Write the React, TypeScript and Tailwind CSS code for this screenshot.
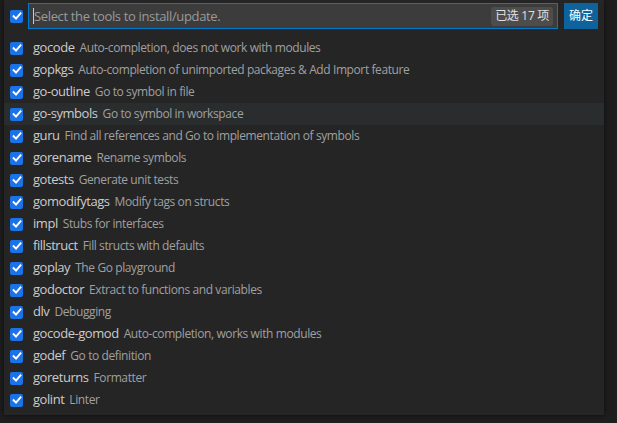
import React from "react";

const tools: [string, string][] = [
  ["gocode", "Auto-completion, does not work with modules"],
  ["gopkgs", "Auto-completion of unimported packages & Add Import feature"],
  ["go-outline", "Go to symbol in file"],
  ["go-symbols", "Go to symbol in workspace"],
  ["guru", "Find all references and Go to implementation of symbols"],
  ["gorename", "Rename symbols"],
  ["gotests", "Generate unit tests"],
  ["gomodifytags", "Modify tags on structs"],
  ["impl", "Stubs for interfaces"],
  ["fillstruct", "Fill structs with defaults"],
  ["goplay", "The Go playground"],
  ["godoctor", "Extract to functions and variables"],
  ["dlv", "Debugging"],
  ["gocode-gomod", "Auto-completion, works with modules"],
  ["godef", "Go to definition"],
  ["goreturns", "Formatter"],
  ["golint", "Linter"],
];

function Check() {
  return (
    <span className="flex items-center justify-center w-[13px] h-[13px] rounded-[2px] bg-[#1a73e8] shrink-0">
      <svg width="10" height="10" viewBox="0 0 10 10" fill="none">
        <path d="M1.6 5.2 L4 7.5 L8.5 2.3" stroke="white" strokeWidth="1.9" strokeLinecap="square" />
      </svg>
    </span>
  );
}

export default function App() {
  return (
    <div className="w-[617px] h-[423px] bg-[#1e1e1e] overflow-hidden" style={{ fontFamily: '"Open Sans", "Noto Sans CJK SC", sans-serif' }}>
      <div className="ml-[4px] w-[600px] h-[415px] bg-[#252526] shadow-[0_0_6px_rgba(0,0,0,0.6)] flex flex-col">
        <div className="flex items-center h-[37px] pt-[3px] pb-[8px]">
          <div className="pl-[6px] pr-[5px] flex items-center"><Check /></div>
          <div className="flex items-center w-[530px] h-[26px] bg-[#3c3c3c] border border-[#007acc] pl-[4px] pr-[4px]">
            <span className="w-px h-[16px] bg-[#cccccc]" />
            <span className="text-[13px] tracking-[-0.35px] text-[#9a9a9a] flex-1 leading-none">Select the tools to install/update.</span>
            <span className="text-[12px] tracking-[-0.3px] text-[#e0e0e0] bg-[#4d4d4d] rounded-[3px] px-[4px] h-[19px] flex items-center">已选 17 项</span>
          </div>
          <button className="ml-[6px] w-[34px] h-[26px] bg-[#0e639c] text-white text-[12px] flex items-center justify-center">确定</button>
        </div>
        <div className="flex flex-col">
          {tools.map(([name, desc], i) => (
            <div key={i} className={`flex items-center h-[22px] pl-[6px] ${i === 3 ? "bg-[#2a2d2e]" : ""}`}>
              <Check />
              <span className="ml-[10px] text-[13px] tracking-[-0.45px] text-[#cccccc] whitespace-nowrap">{name}</span>
              <span className="ml-[5px] text-[12px] tracking-[-0.4px] text-[#a0a0a0] whitespace-nowrap">{desc}</span>
            </div>
          ))}
        </div>
      </div>
    </div>
  );
}
